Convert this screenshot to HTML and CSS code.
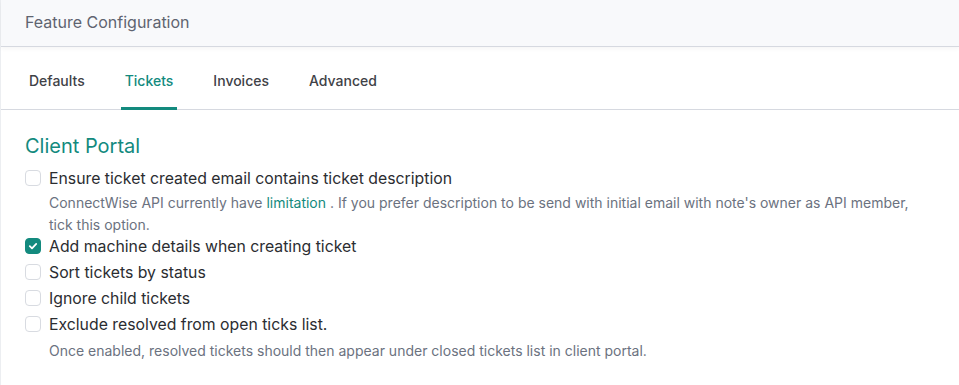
FILE: index.html
```html
<!DOCTYPE html>
<html lang="en">
<head>
    <meta charset="UTF-8">
    <title>Feature Configuration</title>
    <link rel="stylesheet" href="styles.css">
</head>
<body>
    <div class="panel">
        <header class="panel-header">
            <h1>Feature Configuration</h1>
        </header>

        <nav class="tabs">
            <a class="tab">Defaults</a>
            <a class="tab active">Tickets</a>
            <a class="tab">Invoices</a>
            <a class="tab">Advanced</a>
        </nav>

        <section class="section">
            <h2>Client Portal</h2>

            <label class="option">
                <span class="box"></span>
                <span class="option-label">Ensure ticket created email contains ticket description</span>
            </label>
            <p class="hint">ConnectWise API currently have <span class="link">limitation</span> . If you prefer description to be send with initial email with note's owner as API member, tick this option.</p>

            <label class="option">
                <span class="box checked">
                    <svg width="10" height="10" viewBox="0 0 10 10"><path d="M1.8 5.2 L4 7.3 L8.2 2.9" fill="none" stroke="#fff" stroke-width="1.8" stroke-linecap="round" stroke-linejoin="round"/></svg>
                </span>
                <span class="option-label">Add machine details when creating ticket</span>
            </label>

            <label class="option">
                <span class="box"></span>
                <span class="option-label">Sort tickets by status</span>
            </label>

            <label class="option">
                <span class="box"></span>
                <span class="option-label">Ignore child tickets</span>
            </label>

            <label class="option">
                <span class="box"></span>
                <span class="option-label">Exclude resolved from open ticks list.</span>
            </label>
            <p class="hint hint-gap">Once enabled, resolved tickets should then appear under closed tickets list in client portal.</p>
        </section>
    </div>
</body>
</html>
```

FILE: styles.css
```css
:root {
    --teal: #138a7e;
    --text-dark: #2b2d31;
    --text-muted: #6b7280;
    --line: #d6d9e0;
    --header-bg: #f8f9fb;
}

* {
    margin: 0;
    padding: 0;
    box-sizing: border-box;
}

body {
    font-family: Inter, 'Noto Sans', sans-serif;
    background: #ffffff;
    color: var(--text-dark);
}

.panel {
    border-left: 1px solid #eceef1;
    min-height: 385px;
}

.panel-header {
    background: var(--header-bg);
    height: 47px;
    border-bottom: 1px solid var(--line);
    box-shadow: 0 2px 4px rgba(0, 0, 0, 0.04);
    padding: 0 24px;
    display: flex;
    align-items: center;
}

h1 {
    font-size: 16px;
    font-weight: 400;
    color: #5f6470;
    margin-top: -3px;
}

.tabs {
    display: flex;
    gap: 32px;
    padding: 0 24px;
    border-bottom: 1px solid var(--line);
    height: 63px;
    align-items: flex-end;
}

.tab {
    font-size: 14px;
    font-weight: 500;
    color: #3f4247;
    padding: 0 4px 18px;
    border-bottom: 3px solid transparent;
    margin-bottom: -1px;
    cursor: pointer;
}

.tab.active {
    color: var(--teal);
    border-bottom-color: var(--teal);
}

.section {
    padding: 24px 24px 0;
}

h2 {
    font-size: 20px;
    font-weight: 400;
    color: var(--teal);
    line-height: 24px;
    margin-bottom: 7px;
}

.option {
    display: flex;
    align-items: center;
    height: 26px;
    cursor: pointer;
}

.box {
    width: 16px;
    height: 16px;
    border: 1px solid #d8dbe1;
    border-radius: 4px;
    background: #fff;
    margin-right: 8px;
    display: flex;
    align-items: center;
    justify-content: center;
    flex-shrink: 0;
}

.box.checked {
    background: var(--teal);
    border-color: var(--teal);
}

.option-label {
    font-size: 15.8px;
    color: var(--text-dark);
}

.hint {
    font-size: 14px;
    line-height: 22px;
    color: var(--text-muted);
    padding-left: 24px;
    padding-right: 16px;
    margin-top: 1px;
    margin-bottom: -3px;
}

.hint-gap {
    margin-top: 3px;
}

.link {
    color: var(--teal);
}
```
